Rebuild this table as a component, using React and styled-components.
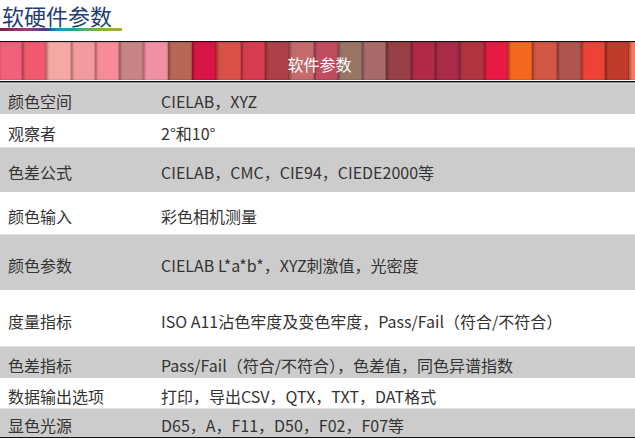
import styled, { createGlobalStyle } from "styled-components";

const GlobalStyle = createGlobalStyle`
  body {
    margin: 0;
    background: #ffffff;
    font-family: "Noto Sans CJK SC", "Noto Sans", sans-serif;
  }
`;

const stripeColors = [
  "#f2607a", "#f05a6e", "#f5a8a4", "#f39a9e", "#f58c98", "#c88486", "#f090a4",
  "#b86656", "#d81444", "#d85048", "#d83c50", "#ae4048", "#c46a6c", "#c04c60",
  "#9a7466", "#a86a6a", "#983e46", "#b02a48", "#a82c48", "#b03440", "#e81a44",
  "#f46820", "#d45644", "#b05450", "#ec4238", "#c23a2a", "#f47a68",
];

const rows = [
  { label: "颜色空间", value: "CIELAB，XYZ", h: 31, grey: true },
  { label: "观察者", value: "2°和10°", h: 33 },
  { label: "色差公式", value: "CIELAB，CMC，CIE94，CIEDE2000等", h: 45, grey: true },
  { label: "颜色输入", value: "彩色相机测量", h: 42 },
  { label: "颜色参数", value: "CIELAB L*a*b*，XYZ刺激值，光密度", h: 56, grey: true },
  { label: "度量指标", value: "ISO A11沾色牢度及变色牢度，Pass/Fail（符合/不符合）", h: 56 },
  { label: "色差指标", value: "Pass/Fail（符合/不符合），色差值，同色异谱指数", h: 32, grey: true },
  { label: "数据输出选项", value: "打印，导出CSV，QTX，TXT，DAT格式", h: 30 },
  { label: "显色光源", value: "D65，A，F11，D50，F02，F07等", h: 29, grey: true },
];

function App() {
  return (
    <>
      <GlobalStyle />
      <Page>
        <TitleArea>
          <Title>软硬件参数</Title>
          <Underline />
        </TitleArea>
        <Band>
          <Stripes>
            {stripeColors.map((c, i) => (
              <Stripe key={i} $bg={c} />
            ))}
          </Stripes>
          <BandText>软件参数</BandText>
        </Band>
        <Table>
          {rows.map((r) => (
            <Row key={r.label} $h={r.h} $grey={r.grey}>
              <Label>{r.label}</Label>
              <Value>{r.value}</Value>
            </Row>
          ))}
        </Table>
      </Page>
    </>
  );
}

const Page = styled.div`
  width: 635px;
  overflow: hidden;
`;

const TitleArea = styled.div`
  box-sizing: border-box;
  padding: 0 0 0 2px;
  height: 41px;
`;

const Title = styled.div`
  font-size: 22px;
  line-height: 30px;
  color: #223d72;
`;

const Underline = styled.div`
  width: 122px;
  height: 3px;
  margin: -2px 0 0 -2px;
  background: linear-gradient(
    to right,
    #7a1f45 0%,
    #a8387a 22%,
    #3c3c8c 38%,
    #1898d0 48%,
    #22a890 60%,
    #62b652 75%,
    #b0b01c 100%
  );
`;

const Band = styled.div`
  position: relative;
  height: 38px;
  border-top: 1.5px solid #111;
  border-bottom: 1px solid #ffffff;
  box-shadow: 0 1.5px 0 #111;
  margin-bottom: 2px;
`;

const Stripes = styled.div`
  display: flex;
  height: 100%;
  margin-left: -2.3px;
`;

const Stripe = styled.div`
  flex: 0 0 24.3px;
  height: 100%;
  background: ${({ $bg }) => $bg};
  box-shadow: inset 2px 0 2px rgba(0, 0, 0, 0.28),
    inset -1px 0 1px rgba(0, 0, 0, 0.15);
`;

const BandText = styled.div`
  position: absolute;
  inset: 0;
  display: flex;
  align-items: center;
  justify-content: center;
  padding: 6px 0 0 4px;
  color: #ffffff;
  font-size: 16px;
`;

const Table = styled.div`
  display: flex;
  flex-direction: column;
  border-bottom: 1.5px solid #111;
`;

const Row = styled.div`
  display: grid;
  grid-template-columns: 161px 1fr;
  align-items: center;
  box-sizing: border-box;
  height: ${({ $h }) => $h}px;
  padding-top: 4px;
  background: ${({ $grey }) => ($grey ? "#cccccc" : "#ffffff")};
  border-top: 1px solid ${({ $grey }) => ($grey ? "#e2e2e2" : "#ffffff")};
  color: #333333;
  font-size: 16px;
  line-height: 22px;
`;

const Label = styled.div`
  padding-left: 8px;
`;

const Value = styled.div`
  white-space: nowrap;
`;

export default App;
